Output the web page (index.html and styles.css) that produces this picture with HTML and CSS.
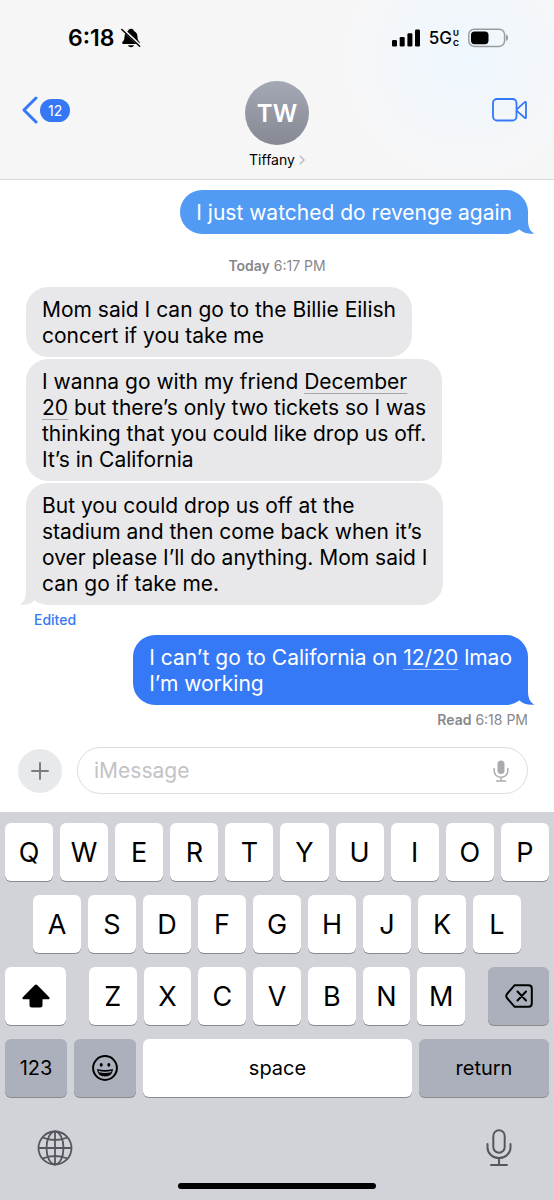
FILE: index.html
```html
<!DOCTYPE html>
<html lang="en">
<head>
<meta charset="utf-8">
<meta name="viewport" content="width=device-width, initial-scale=1">
<title>Tiffany</title>
<link rel="stylesheet" href="styles.css">
</head>
<body>
<svg class="defs" aria-hidden="true">
  <symbol id="tail" viewBox="0 0 22 24"><path d="M15 0V10C15 17 17 21.500 21.500 23.600C16 24.500 10 23 6 19L2 0Z"/></symbol>
</svg>

<header class="header">
  <div class="status">
    <div class="status-left">
      <span class="clock">6:18</span>
      <svg class="bell" viewBox="0 0 20 20" aria-hidden="true">
        <path d="M10 .8c-1.700 0-2.700 1-2.900 2.200C4.700 4 3.600 6 3.500 8.700c-.1 3-.8 3.900-1.900 5.100-.9 1-.5 2.200.8 2.200h15.200c1.300 0 1.700-1.200.8-2.200-1.100-1.200-1.800-2.100-1.900-5.100C16.400 6 15.300 4 12.900 3 12.700 1.800 11.700.8 10 .8ZM7 17.200c.4 1.300 1.500 2 3 2s2.600-.7 3-2Z"/>
        <path class="bell-gap" d="M1.500 1.200 19 17.500"/>
        <path class="bell-slash" d="M.8 1.500 18.600 18.300"/>
      </svg>
    </div>
    <div class="status-right">
      <svg class="signal" viewBox="0 0 28 18" aria-hidden="true"><rect y="11" width="5" height="6.500" rx="1.300"/><rect x="7.700" y="8" width="5" height="9.500" rx="1.300"/><rect x="15.400" y="4.300" width="5" height="13.200" rx="1.300"/><rect x="23" y=".5" width="5" height="17" rx="1.300"/></svg>
      <span class="network">5G<span class="network-sub"><span>U</span><span>C</span></span></span>
      <svg class="battery" viewBox="0 0 41 20" aria-hidden="true"><rect class="battery-case" x=".8" y="1.200" width="35.800" height="17.200" rx="5.500"/><rect x="3" y="3.500" width="17.500" height="12.700" rx="3.600"/><path class="battery-cap" d="M38 6.500c2.800 1.200 2.800 5.400 0 6.600Z"/></svg>
    </div>
  </div>
  <nav class="nav">
    <button class="back" aria-label="Back, 12 unread">
      <svg class="chevron" viewBox="0 0 16 28" aria-hidden="true"><path d="M14 2 2 14 14 26"/></svg>
      <span class="badge">12</span>
    </button>
    <button class="contact">
      <span class="avatar">TW</span>
      <span class="name">Tiffany <svg viewBox="0 0 6 10" aria-hidden="true"><path d="M.8.800 5 5 .8 9.200"/></svg></span>
    </button>
    <button class="video" aria-label="Video call">
      <svg viewBox="0 0 36 24" aria-hidden="true"><rect x="1" y="1" width="23.500" height="21.500" rx="4"/><path d="M24.500 11.700 32.700 4.200Q34 3.200 34 4.800V19.200Q34 20.800 32.700 19.800L24.500 12.600"/></svg>
    </button>
  </nav>
</header>

<main class="thread">
  <p class="bubble sent faded">I just watched do revenge again<svg class="tail"><use href="#tail"/></svg></p>
  <p class="stamp"><b>Today</b> 6:17 PM</p>
  <p class="bubble received">Mom said I can go to the Billie Eilish<br>concert if you take me</p>
  <p class="bubble received">I wanna go with my friend <a href="#">December</a><br><a href="#">20</a> but there’s only two tickets so I was<br>thinking that you could like drop us off.<br>It’s in California</p>
  <p class="bubble received">But you could drop us off at the<br>stadium and then come back when it’s<br>over please I’ll do anything. Mom said I<br>can go if take me.<svg class="tail"><use href="#tail"/></svg></p>
  <button class="edited">Edited</button>
  <p class="bubble sent">I can’t go to California on <a href="#">12/20</a> lmao<br>I’m working<svg class="tail"><use href="#tail"/></svg></p>
  <p class="receipt"><b>Read</b> 6:18 PM</p>
</main>

<form class="composer">
  <button type="button" class="plus" aria-label="Add"><svg viewBox="0 0 18 18" aria-hidden="true"><path d="M9 1V17M1 9H17"/></svg></button>
  <div class="field">
    <input type="text" placeholder="iMessage" aria-label="iMessage">
    <button type="button" class="dictate" aria-label="Dictate"><svg viewBox="0 0 16 22" aria-hidden="true"><rect class="fill" x="4.500" y=".5" width="7" height="13.500" rx="3.500"/><path d="M1.200 8.500V11a6.800 6.300 0 0 0 13.600 0V8.500M8 17.500V21M3.500 21H12.500"/></svg></button>
  </div>
</form>

<section class="keyboard" aria-label="Keyboard">
  <div class="row"><button class="key">Q</button><button class="key">W</button><button class="key">E</button><button class="key">R</button><button class="key">T</button><button class="key">Y</button><button class="key">U</button><button class="key">I</button><button class="key">O</button><button class="key">P</button></div>
  <div class="row inset"><button class="key">A</button><button class="key">S</button><button class="key">D</button><button class="key">F</button><button class="key">G</button><button class="key">H</button><button class="key">J</button><button class="key">K</button><button class="key">L</button></div>
  <div class="row spread">
    <button class="key side" aria-label="Shift"><svg class="shift" viewBox="0 0 28 24" aria-hidden="true"><path d="M12.800 1Q14 0 15.200 1L27 13Q28.500 15 26.500 15.200H20.500V21Q20.500 23.500 18 23.500H10Q7.500 23.500 7.500 21V15.200H1.500Q-.5 15 1 13Z"/></svg></button>
    <div class="letters"><button class="key">Z</button><button class="key">X</button><button class="key">C</button><button class="key">V</button><button class="key">B</button><button class="key">N</button><button class="key">M</button></div>
    <button class="key side dark" aria-label="Delete"><svg class="delete" viewBox="0 0 28 24" aria-hidden="true"><path d="M9.500 1.300H23.500Q26.800 1.300 26.800 4.500V19.500Q26.800 22.700 23.500 22.700H9.500L2 14Q.5 12 2 10ZM12.500 7.500 21 16.500M21 7.500 12.500 16.500"/></svg></button>
  </div>
  <div class="row">
    <button class="key function dark">123</button>
    <button class="key function dark" aria-label="Emoji"><svg class="emoji" viewBox="0 0 26 26" aria-hidden="true"><circle cx="13" cy="13" r="11.900"/><ellipse class="solid" cx="9.200" cy="9.800" rx="1.500" ry="1.900"/><ellipse class="solid" cx="16.800" cy="9.800" rx="1.500" ry="1.900"/><path class="solid" d="M5 14Q13 16 21 14Q20.500 21.500 13 21.500T5 14Z"/><path class="teeth" d="M6.500 15.800Q13 17.500 19.500 15.800L19 17.300Q13 18.600 7 17.300Z"/></svg></button>
    <button class="key space">space</button>
    <button class="key return dark">return</button>
  </div>
  <div class="dock">
    <button aria-label="Next keyboard"><svg class="globe" viewBox="0 0 36 36" aria-hidden="true"><circle cx="18" cy="18" r="16.500"/><ellipse cx="18" cy="18" rx="8.500" ry="16.500"/><path d="M18 1.500V34.500M1.500 18H34.500M5.500 7.500Q18 12.500 30.500 7.500M5.500 28.500Q18 23.500 30.500 28.500"/></svg></button>
    <button aria-label="Dictation"><svg class="mic" viewBox="0 0 26 38" aria-hidden="true"><rect x="7.300" y="1.200" width="11.400" height="22.500" rx="5.700"/><path d="M1.500 15V18.500a11.500 10.500 0 0 0 23 0V15M13 29V36M5 36H21"/></svg></button>
  </div>
  <div class="home"></div>
</section>
</body>
</html>
```

FILE: styles.css
```css
* { box-sizing: border-box; }

body {
  margin: 0;
  min-height: 100vh;
  display: flex;
  flex-direction: column;
  background: #fff;
  color: #000;
  font-family: Inter, "Liberation Sans", sans-serif;
}

button {
  padding: 0;
  border: 0;
  background: none;
  color: inherit;
  font: inherit;
}

p { margin: 0; }
svg { display: block; flex: none; }
.defs { position: absolute; width: 0; height: 0; }

.header {
  background: radial-gradient(circle at 84% 32%, #eef7fe 0, #f6f6f7 120px) #f6f6f7;
  border-bottom: 1px solid #d9dbdc;
}

.status {
  display: flex;
  justify-content: space-between;
  align-items: center;
  height: 76px;
  padding: 0 45px 0 68px;
}

.status-left { display: flex; align-items: center; gap: 6px; }
.status-right { display: flex; align-items: center; gap: 9px; }
.clock { font-size: 23px; font-weight: 600; }
.bell { width: 20px; height: 20px; }
.bell-gap { stroke: #f6f6f7; stroke-width: 3; }
.bell-slash { stroke: #000; stroke-width: 1.500; stroke-linecap: round; }
.signal { width: 28px; height: 18px; }
.network { display: flex; align-items: center; gap: 1px; font-size: 17px; font-weight: 500; }
.network-sub { display: grid; font-size: 8px; line-height: 10px; font-weight: 700; }
.battery { width: 41px; height: 20px; }
.battery-case { fill: none; stroke: #9a9c9e; stroke-width: 1.500; }
.battery-cap { fill: #9a9c9e; }

.nav {
  display: grid;
  grid-template-columns: 1fr auto 1fr;
  align-items: start;
  padding: 5px 22px 10px;
}

.back { display: flex; align-items: center; gap: 2px; margin-top: 15px; justify-self: start; }
.chevron { width: 16px; height: 28px; fill: none; stroke: #3478f6; stroke-width: 3; stroke-linecap: round; stroke-linejoin: round; }
.badge { padding: 0 8px; border-radius: 12px; background: #3478f6; color: #fff; font-size: 14px; line-height: 23px; }
.contact { display: flex; flex-direction: column; align-items: center; gap: 6px; }
.avatar {
  display: grid;
  place-items: center;
  width: 64px;
  height: 64px;
  border-radius: 50%;
  background: linear-gradient(#a4a8b4, #868993);
  color: #fff;
  font-size: 24px;
  font-weight: 600;
}
.name { display: flex; align-items: center; gap: 4px; font-size: 14px; line-height: 18px; }
.name svg { width: 6px; height: 10px; fill: none; stroke: #bcbdc0; stroke-width: 1.500; }
.video { justify-self: end; margin: 17px 4px 0 0; }
.video svg { width: 36px; height: 24px; fill: none; stroke: #3478f6; stroke-width: 1.800; }

.thread {
  flex: 1;
  display: flex;
  flex-direction: column;
  align-items: flex-start;
  gap: 2px;
  padding: 10px 26px 8px;
}

.bubble {
  position: relative;
  padding: 10px 16px 8px;
  border-radius: 22px;
  font-size: 21px;
  line-height: 26px;
}
.bubble a { color: inherit; text-decoration: underline; text-decoration-thickness: 1px; text-underline-offset: 4px; text-decoration-color: #a5a6a9; }
.received { background: #e8e8ea; }
.sent { align-self: flex-end; background: #3579f6; color: #fff; }
.sent a { text-decoration-color: #9fc2fb; }
.faded { background: #529bf5; }
.tail { position: absolute; bottom: 0; width: 22px; height: 24px; }
.sent .tail { right: -7px; fill: #3579f6; }
.faded .tail { fill: #529bf5; }
.received .tail { left: -7px; fill: #e8e8ea; transform: scaleX(-1); }

.stamp, .receipt { color: #88888c; font-size: 14px; line-height: 16px; }
.stamp { align-self: center; margin: 22px 0 11px; }
.edited { margin: 4px 8px 5px; color: #3478f6; font-size: 14px; font-weight: 500; line-height: 17px; }
.receipt { align-self: flex-end; margin-top: 5px; }
.stamp b, .receipt b { font-weight: 600; }

.composer { display: flex; align-items: center; gap: 15px; padding: 0 26px 18px 18px; }
.plus { display: grid; place-items: center; width: 44px; height: 44px; border-radius: 50%; background: #e8e9eb; }
.plus svg { width: 18px; height: 18px; stroke: #7b7d82; stroke-width: 2; stroke-linecap: round; }
.field { flex: 1; display: flex; align-items: center; height: 47px; padding: 0 18px 0 16px; border: 1px solid #dcdddf; border-radius: 24px; }
.field input { flex: 1; min-width: 0; padding: 0; border: 0; outline: 0; background: none; font: inherit; font-size: 21px; }
.field input::placeholder { color: #c2c3c6; opacity: 1; }
.dictate svg { width: 16px; height: 22px; fill: none; stroke: #a9abb0; stroke-width: 1.500; stroke-linecap: round; }
.dictate .fill { fill: #a9abb0; stroke: none; }

.keyboard { display: flex; flex-direction: column; gap: 14px; padding: 11px 5px; background: #d1d3d9; }
.row { display: flex; gap: 7px; }
.inset { padding: 0 28px; }
.spread { gap: 23px; }
.letters { flex: 1; display: flex; gap: 7px; }
.key {
  flex: 1 1 0;
  min-width: 0;
  display: grid;
  place-items: center;
  height: 58px;
  border-radius: 6px;
  background: #fff;
  box-shadow: 0 1px 0 #898a8d;
  font-size: 27px;
}
.dark { background: #abb0bc; }
.side { flex: 0 0 61px; }
.function { flex: 0 0 62px; font-size: 20px; }
.space { font-size: 20px; }
.return { flex: 0 0 130px; font-size: 20px; }
.shift { width: 28px; height: 24px; }
.delete { width: 28px; height: 24px; fill: none; stroke: #000; stroke-width: 2; stroke-linecap: round; stroke-linejoin: round; }
.emoji { width: 26px; height: 26px; fill: none; stroke: #000; stroke-width: 2; }
.emoji .solid { fill: #000; stroke: none; }
.emoji .teeth { fill: #abb0bc; stroke: none; }
.dock { display: flex; justify-content: space-between; align-items: center; height: 38px; margin: 18px 0 2px; padding: 0 37px 0 32px; }
.globe { width: 36px; height: 36px; fill: none; stroke: #54575d; stroke-width: 1.800; }
.mic { width: 26px; height: 38px; fill: none; stroke: #54575d; stroke-width: 2; stroke-linecap: round; }
.home { width: 198px; height: 6px; border-radius: 3px; background: #000; align-self: center; }
```
